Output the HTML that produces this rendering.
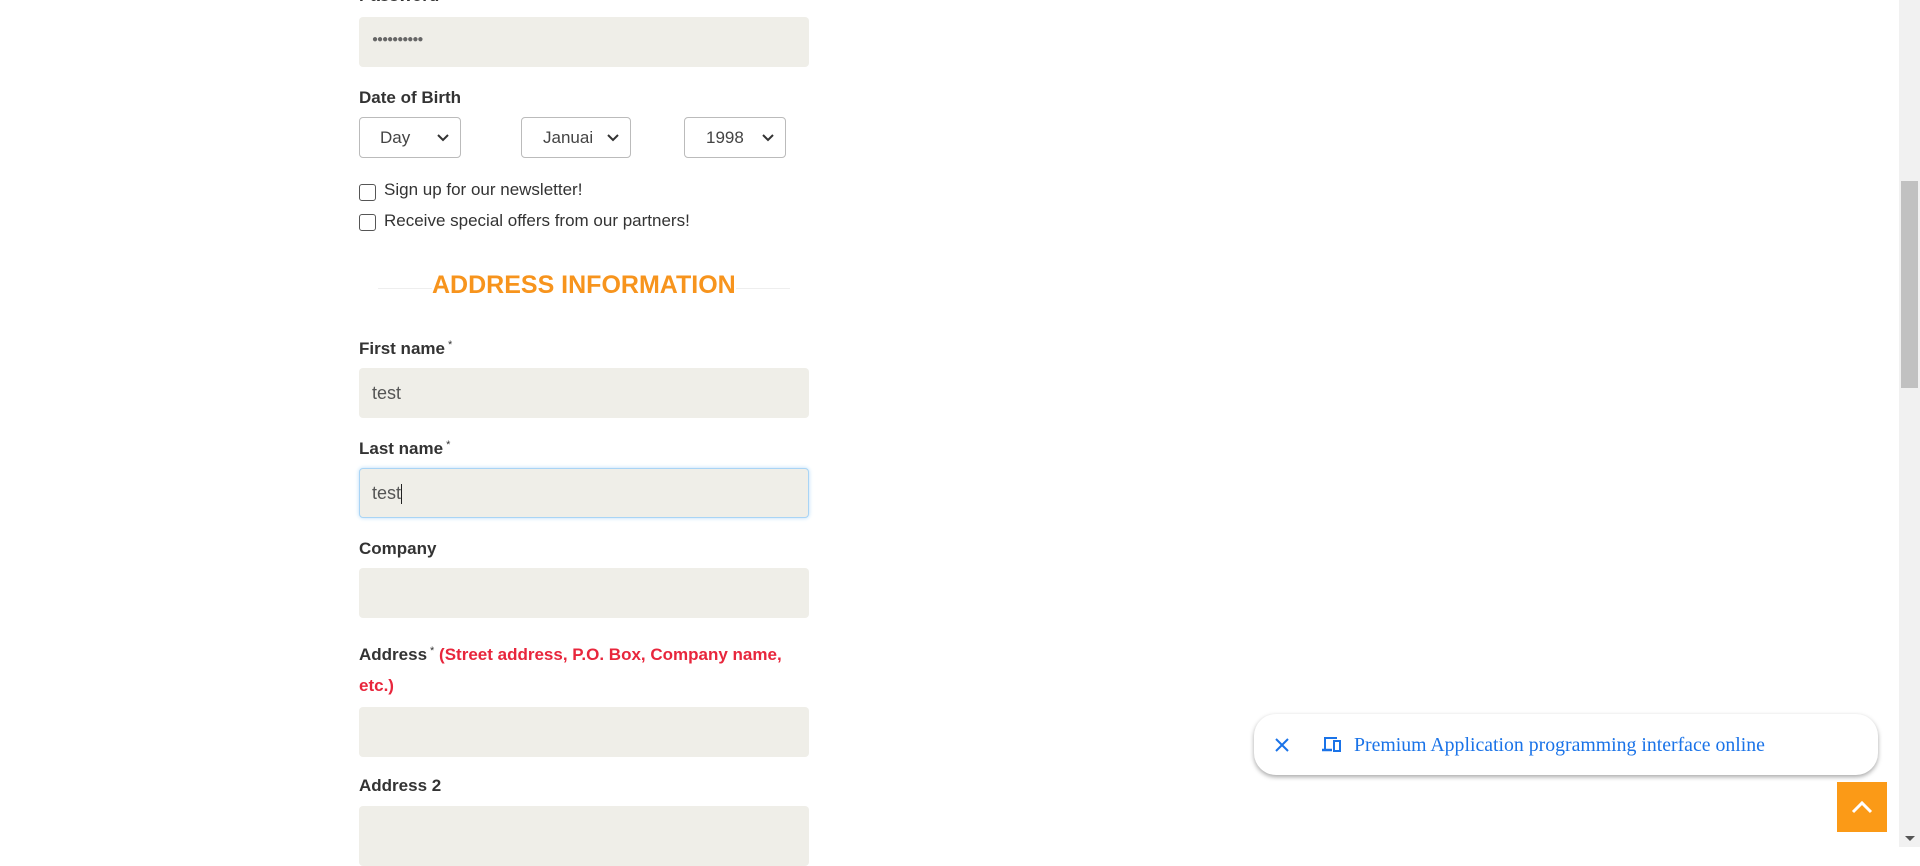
<!DOCTYPE html>
<html><head><meta charset="utf-8"><style>
body{margin:0;width:1920px;height:847px;overflow:hidden;background:#fff;font-family:"Liberation Sans",Arial,sans-serif;color:#333;position:relative}
.a{position:absolute}
.lbl{position:absolute;left:359px;font-size:17px;font-weight:bold;color:#333}
.lbl sup{font-size:11px;font-weight:normal;vertical-align:6px;margin-left:3px}
.inp{position:absolute;left:359px;width:450px;height:50px;background:#efeee8;border-radius:4px;box-sizing:border-box;font-size:18px;color:#555;padding:0 0 0 13px;line-height:50px}
.sel{position:absolute;top:117px;height:41px;border:1px solid #bbb;border-radius:4px;box-sizing:border-box;font-size:17px;color:#444;line-height:39px}
.sel svg{position:absolute;right:10px;top:15px}
.cb{position:absolute;left:359px;width:17px;height:17px;border:1.5px solid #555;border-radius:3px;box-sizing:border-box}
.ct{position:absolute;left:384px;font-size:17px;color:#333}
</style></head><body>
<div class="lbl" style="top:-14px">Password</div>
<div class="inp" style="top:17px;line-height:46px;letter-spacing:-1px;font-size:10px;color:#666">●●●●●●●●●●</div>
<div class="lbl" style="top:88px">Date of Birth</div>
<div class="sel" style="left:359px;width:102px"><span style="position:absolute;left:20px">Day</span><svg width="14" height="10"><path d="M2 2l5 5 5-5" stroke="#333" stroke-width="2" fill="none"/></svg></div>
<div class="sel" style="left:521px;width:110px"><span style="position:absolute;left:21px">Januai</span><svg width="14" height="10"><path d="M2 2l5 5 5-5" stroke="#333" stroke-width="2" fill="none"/></svg></div>
<div class="sel" style="left:684px;width:102px"><span style="position:absolute;left:21px">1998</span><svg width="14" height="10"><path d="M2 2l5 5 5-5" stroke="#333" stroke-width="2" fill="none"/></svg></div>
<div class="cb" style="top:184px"></div><div class="ct" style="top:180px">Sign up for our newsletter!</div>
<div class="cb" style="top:214px"></div><div class="ct" style="top:211px">Receive special offers from our partners!</div>
<div class="a" style="left:378px;top:288px;width:412px;height:1px;background:#eee"></div>
<div class="a" style="left:432px;top:271px;padding:0 0;background:#fff;font-size:25px;font-weight:bold;color:#f7941d">ADDRESS INFORMATION</div>
<div class="lbl" style="top:339px">First name<sup>*</sup></div>
<div class="inp" style="top:368px">test</div>
<div class="lbl" style="top:439px">Last name<sup>*</sup></div>
<div class="inp" style="top:468px;border:1px solid #a9d4f5;box-shadow:0 0 4px #b8dcf7;padding-left:12px;line-height:48px">test<span style="border-left:1px solid #222;height:20px;display:inline-block;vertical-align:middle"></span></div>
<div class="lbl" style="top:539px">Company</div>
<div class="inp" style="top:568px"></div>
<div class="lbl" style="top:636px;width:450px;line-height:31px">Address<sup>*</sup> <span style="color:#e8263c">(Street address, P.O. Box, Company name, etc.)</span></div>
<div class="inp" style="top:707px"></div>
<div class="lbl" style="top:776px">Address 2</div>
<div class="inp" style="top:806px;height:60px"></div>
<div class="a" style="left:1254px;top:714px;width:624px;height:61px;border-radius:22px;background:#fff;box-shadow:0 2px 5px rgba(0,0,0,.35)">
<svg class="a" style="left:20px;top:23px" width="16" height="16"><path d="M2 2l12 12M14 2L2 14" stroke="#1a73e8" stroke-width="2"/></svg>
<svg class="a" style="left:68px;top:21px" width="20" height="18"><path d="M3 14V3h12" stroke="#1a73e8" stroke-width="2" fill="none"/><path d="M0 15h10" stroke="#1a73e8" stroke-width="2.5"/><rect x="12" y="6" width="6" height="10" stroke="#1a73e8" stroke-width="2" fill="none"/></svg>
<div class="a" style="left:100px;top:20px;font-family:'Liberation Serif',serif;font-size:19.8px;color:#1a73e8">Premium Application programming interface online</div>
</div>
<div class="a" style="left:1837px;top:782px;width:50px;height:50px;background:#fb9a17"><svg width="50" height="50"><path d="M16 30l9-9 9 9" stroke="#fff" stroke-width="3" fill="none"/></svg></div>
<div class="a" style="left:1899px;top:0;width:21px;height:847px;background:#f1f1f1"></div>
<div class="a" style="left:1901px;top:181px;width:17px;height:207px;background:#c1c1c1"></div>
<div class="a" style="left:1905px;top:836px;width:0;height:0;border-left:5px solid transparent;border-right:5px solid transparent;border-top:5px solid #555"></div>
</body></html>
